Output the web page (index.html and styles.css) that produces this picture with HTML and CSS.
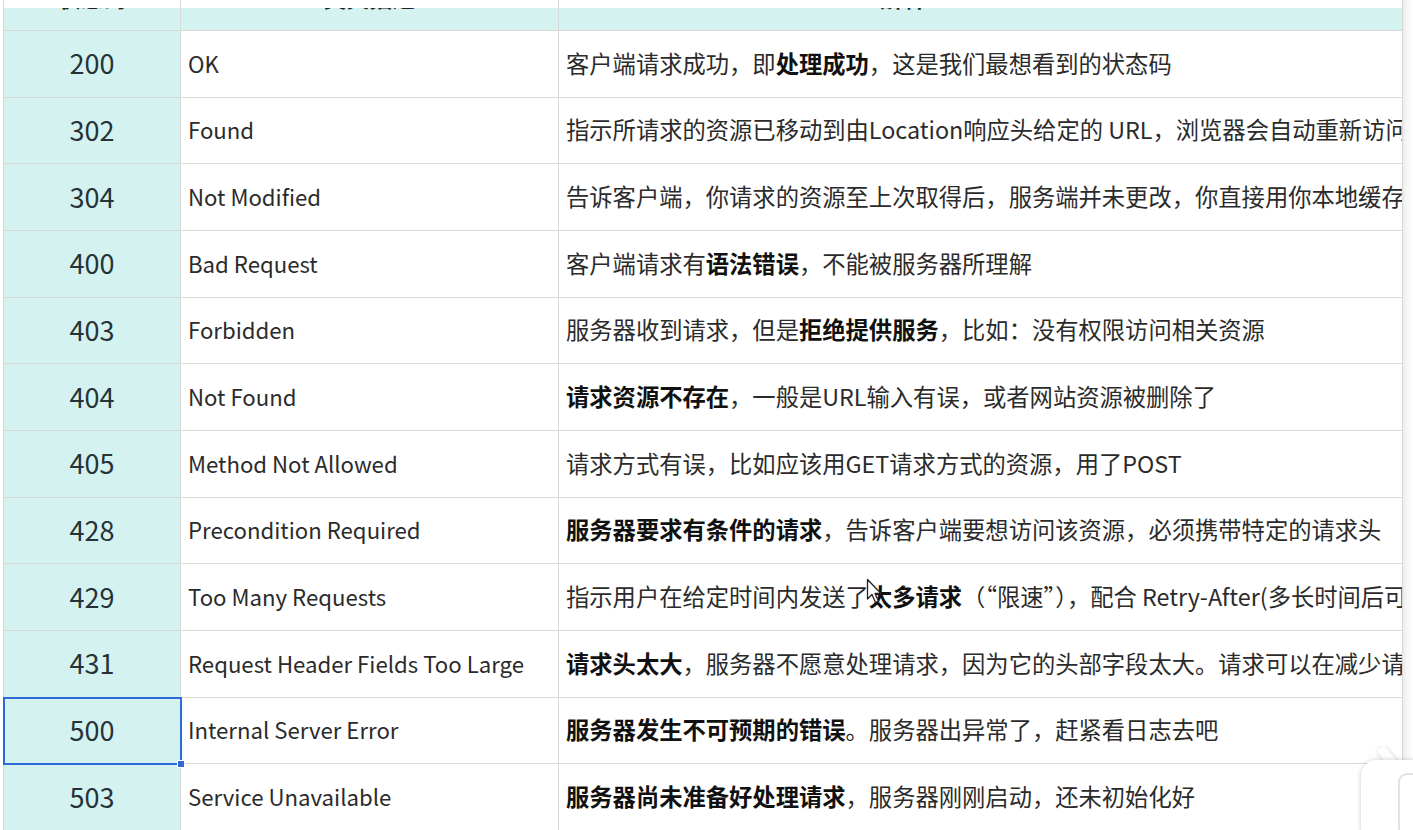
FILE: index.html
```html
<!DOCTYPE html>
<html lang="zh-CN">
<head>
<meta charset="utf-8">
<title>HTTP 状态码</title>
<link rel="stylesheet" href="styles.css">
</head>
<body>
<div class="page">
  <div class="sheet">
    <div class="row frame">
      <div class="cell code"></div>
      <div class="cell name"></div>
      <div class="cell desc"></div>
    </div>
    <div class="row head">
      <div class="cell code"><span class="htext">状态码</span></div>
      <div class="cell name"><span class="htext">英文描述</span></div>
      <div class="cell desc"><span class="htext">解释</span></div>
    </div>
    <div class="row">
      <div class="cell code">200</div>
      <div class="cell name">OK</div>
      <div class="cell desc">客户端请求成功，即<b>处理成功</b>，这是我们最想看到的状态码</div>
    </div>
    <div class="row">
      <div class="cell code">302</div>
      <div class="cell name">Found</div>
      <div class="cell desc">指示所请求的资源已移动到由Location响应头给定的 URL，浏览器会自动重新访问到这个页面</div>
    </div>
    <div class="row">
      <div class="cell code">304</div>
      <div class="cell name">Not Modified</div>
      <div class="cell desc">告诉客户端，你请求的资源至上次取得后，服务端并未更改，你直接用你本地缓存吧。304是重定向</div>
    </div>
    <div class="row">
      <div class="cell code">400</div>
      <div class="cell name">Bad Request</div>
      <div class="cell desc">客户端请求有<b>语法错误</b>，不能被服务器所理解</div>
    </div>
    <div class="row">
      <div class="cell code">403</div>
      <div class="cell name">Forbidden</div>
      <div class="cell desc">服务器收到请求，但是<b>拒绝提供服务</b>，比如：没有权限访问相关资源</div>
    </div>
    <div class="row">
      <div class="cell code">404</div>
      <div class="cell name">Not Found</div>
      <div class="cell desc"><b>请求资源不存在</b>，一般是URL输入有误，或者网站资源被删除了</div>
    </div>
    <div class="row">
      <div class="cell code">405</div>
      <div class="cell name">Method Not Allowed</div>
      <div class="cell desc">请求方式有误，比如应该用GET请求方式的资源，用了POST</div>
    </div>
    <div class="row">
      <div class="cell code">428</div>
      <div class="cell name">Precondition Required</div>
      <div class="cell desc"><b>服务器要求有条件的请求</b>，告诉客户端要想访问该资源，必须携带特定的请求头</div>
    </div>
    <div class="row">
      <div class="cell code">429</div>
      <div class="cell name">Too Many Requests</div>
      <div class="cell desc">指示用户在给定时间内发送了<b>太多请求</b>（“限速”），配合 Retry-After(多长时间后可以请求)响应头一起使用</div>
    </div>
    <div class="row">
      <div class="cell code">431</div>
      <div class="cell name">Request Header Fields Too Large</div>
      <div class="cell desc"><b>请求头太大</b>，服务器不愿意处理请求，因为它的头部字段太大。请求可以在减少请求头域的大小后重新提交。</div>
    </div>
    <div class="row">
      <div class="cell code selected">500</div>
      <div class="cell name">Internal Server Error</div>
      <div class="cell desc"><b>服务器发生不可预期的错误</b>。服务器出异常了，赶紧看日志去吧</div>
    </div>
    <div class="row">
      <div class="cell code">503</div>
      <div class="cell name">Service Unavailable</div>
      <div class="cell desc"><b>服务器尚未准备好处理请求</b>，服务器刚刚启动，还未初始化好</div>
    </div>
  </div>
  <div class="edge"></div>

  <svg class="cursor" width="20" height="28" viewBox="0 0 20 28">
    <path d="M1.5 1.5 L1.5 21 L6 16.5 L9.5 24.5 L12.5 23.2 L9 15.5 L15 15.5 Z" fill="#fff" stroke="#222" stroke-width="1.3" stroke-linejoin="round"/>
  </svg>

  <svg class="widget" width="56" height="84" viewBox="0 0 56 84">
    <defs>
      <filter id="sh" x="-40%" y="-40%" width="180%" height="180%">
        <feDropShadow dx="0" dy="0" stdDeviation="2.5" flood-color="#000" flood-opacity="0.2"/>
      </filter>
    </defs>
    <rect x="26" y="0" width="9" height="22" rx="4.5" transform="rotate(-40 30 11)" fill="#fff" filter="url(#sh)"/>
    <rect x="4" y="14" width="80" height="84" rx="16" fill="#fff" filter="url(#sh)"/>
    <rect x="42" y="28" width="22" height="62" rx="8" fill="none" stroke="#e2e2e2" stroke-width="2"/>
  </svg>
</div>
</body>
</html>
```

FILE: styles.css
```css
html, body {
  margin: 0;
  padding: 0;
  background: #ffffff;
}

.page {
  position: relative;
  display: flex;
  width: 1413px;
  height: 830px;
  overflow: hidden;
  background: #ffffff;
  font-family: "Noto Sans CJK SC", "Noto Sans", sans-serif;
  color: #2a2a2a;
}

.sheet {
  flex: 0 0 auto;
  width: 1403px;
  box-sizing: border-box;
  padding-left: 3px;
  display: flex;
  flex-direction: column;
}

.edge {
  flex: 1 1 auto;
  background: linear-gradient(to right, #ebebeb, #f7f7f7 40%, #ffffff);
}

.row {
  display: grid;
  grid-template-columns: 178px 378px 844px;
  height: 66.67px;
  flex: 0 0 auto;
}

.row.frame {
  height: 8px;
}

.row.head {
  height: 23px;
}

.cell {
  box-sizing: border-box;
  border-right: 1px solid #d9d9d9;
  border-bottom: 1px solid #d9d9d9;
  display: flex;
  align-items: center;
  padding-bottom: 2px;
  white-space: nowrap;
  overflow: hidden;
  font-size: 22.2px;
}

.cell.code {
  border-left: 1px solid #d9d9d9;
  background: #d3f2f0;
  justify-content: center;
  font-size: 27px;
  color: #263238;
  position: relative;
  overflow: visible;
}

.cell.name {
  padding-left: 7px;
  color: #2b2b2b;
}

.cell.desc {
  padding-left: 7px;
  font-size: 23.3px;
  color: #2b2b2b;
}

.cell b {
  font-weight: 700;
  color: #111111;
}

.row.frame .cell {
  background: #ffffff;
  border-bottom: none;
  padding: 0;
}

.row.head .cell {
  background: #d3f2f0;
  align-items: flex-start;
  padding: 0;
  overflow: hidden;
}

.row.head .cell.name {
  justify-content: center;
}

.row.head .cell.desc {
  justify-content: center;
  padding-right: 154px;
}

.htext {
  display: block;
  margin-top: -22px;
  line-height: 1;
  font-size: 23px;
  font-weight: 700;
  color: #222222;
}

.cell.selected::after {
  content: "";
  position: absolute;
  left: -1px;
  top: -1px;
  right: -2px;
  bottom: -2px;
  border: 2px solid #2f6ad8;
  z-index: 2;
}

.cell.selected::before {
  content: "";
  position: absolute;
  right: -5px;
  bottom: -5px;
  width: 6px;
  height: 6px;
  background: #2f6ad8;
  border: 1px solid #ffffff;
  z-index: 3;
}

.cursor {
  position: absolute;
  left: 866px;
  top: 578px;
  z-index: 5;
}

.widget {
  position: absolute;
  right: 0;
  bottom: 0;
  z-index: 5;
}
```
